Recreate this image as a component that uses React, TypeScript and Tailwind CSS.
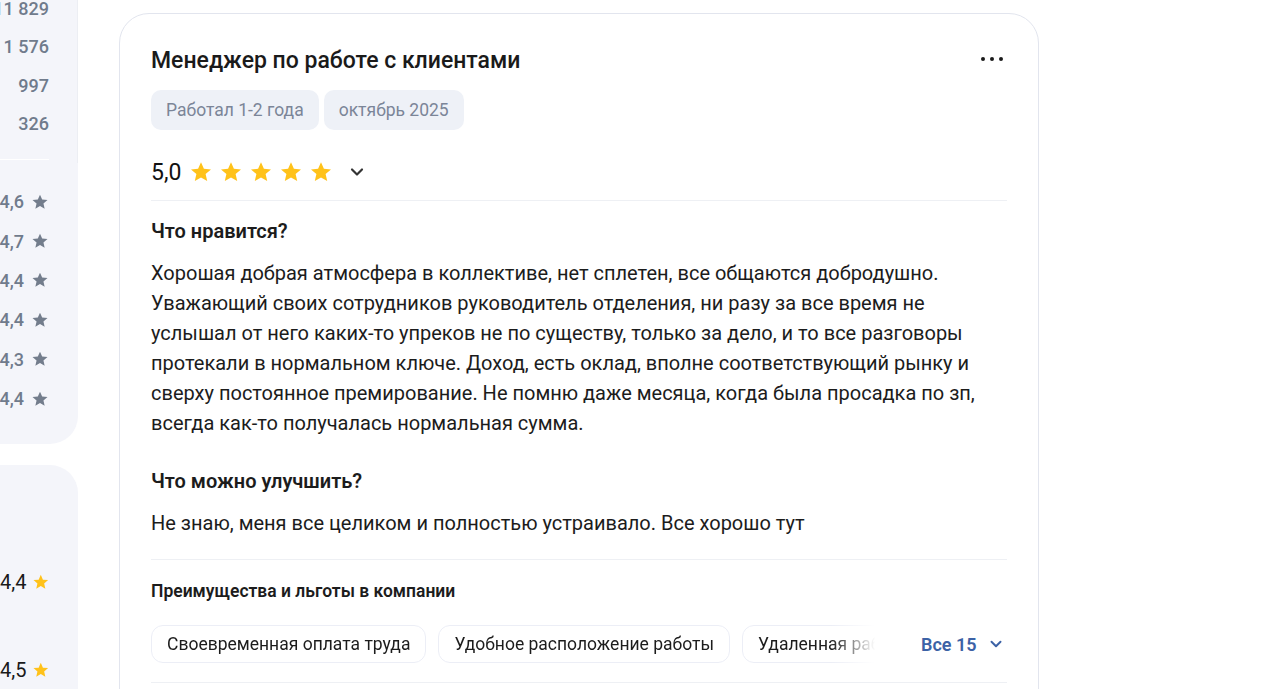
const Star = ({ className }: { className: string }) => (
  <svg viewBox="0 0 24 24" className={className} fill="currentColor" aria-hidden="true">
    <path d="M12 2.2l2.9 6.6 7.1.6-5.4 4.7 1.6 7-6.2-3.7-6.2 3.7 1.6-7L2 9.4l7.1-.6z" />
  </svg>
);

const Chevron = ({ className }: { className: string }) => (
  <svg viewBox="0 0 24 24" className={className} fill="none" stroke="currentColor" strokeWidth="2.6" strokeLinecap="round" strokeLinejoin="round" aria-hidden="true">
    <polyline points="6 9 12 15 18 9" />
  </svg>
);

const counts = ["11 829", "1 576", "997", "326"];
const ratings = ["4,6", "4,7", "4,4", "4,4", "4,3", "4,4"];

const liked = [
  "Хорошая добрая атмосфера в коллективе, нет сплетен, все общаются добродушно.",
  "Уважающий своих сотрудников руководитель отделения, ни разу за все время не",
  "услышал от него каких-то упреков не по существу, только за дело, и то все разговоры",
  "протекали в нормальном ключе. Доход, есть оклад, вполне соответствующий рынку и",
  "сверху постоянное премирование. Не помню даже месяца, когда была просадка по зп,",
  "всегда как-то получалась нормальная сумма.",
];

const benefits = ["Своевременная оплата труда", "Удобное расположение работы", "Удаленная работа"];

export default function App() {
  return (
    <div
      className="flex h-[689px] w-[1261px] gap-[41px] overflow-hidden bg-white"
      style={{ fontFamily: "Roboto, 'Noto Sans', sans-serif" }}
    >
      {/* left sidebar, clipped */}
      <aside className="flex w-[78px] shrink-0 flex-col">
        <div className="relative h-[444px] overflow-hidden rounded-br-[28px] bg-[#f4f5fa] pr-[29px]">
          <div className="absolute right-0 top-0 h-[163px] w-px bg-[#eceef3]" />
          <ul className="-mt-[11px] flex flex-col items-end text-[18px] font-medium text-[#707b8c]">
            {counts.map((c) => (
              <li key={c} className="flex h-[38.5px] items-center whitespace-nowrap">{c}</li>
            ))}
          </ul>
          <div className="ml-auto mt-[16px] h-px w-[49px] bg-white" />
          <ul className="mt-[22px] flex flex-col items-end text-[18px] font-medium text-[#707b8c]">
            {ratings.map((r, i) => (
              <li key={i} className="flex h-[39.4px] items-center gap-[7px] whitespace-nowrap">
                {r}
                <Star className="h-[18px] w-[18px] text-[#737d8c]" />
              </li>
            ))}
          </ul>
        </div>
        <div className="mt-[21px] flex-1 rounded-tr-[28px] bg-[#f4f5fa] pr-[28px]">
          <div className="mt-[102px] flex items-center justify-end gap-[6px] text-[20px] text-[#1a1a1a]">
            4,4 <Star className="h-[22px] w-[22px] text-[#ffc21a]" />
          </div>
          <div className="mt-[58px] flex items-center justify-end gap-[6px] text-[20px] text-[#1a1a1a]">
            4,5 <Star className="h-[22px] w-[22px] text-[#ffc21a]" />
          </div>
        </div>
      </aside>

      {/* review card */}
      <section className="mt-[13px] h-[720px] w-[920px] shrink-0 rounded-[30px] border border-[#e2e5ee] bg-white px-[31px] pt-[33px] text-[#1c1c1c]">
        <div className="flex items-start justify-between">
          <h2 className="text-[23px] font-medium leading-[28px] text-[#1a1a1a]">Менеджер по работе с клиентами</h2>
          <button className="mr-[4px] mt-[10px] flex gap-[5px]" aria-label="Ещё">
            <span className="h-[4px] w-[4px] rounded-full bg-[#1a1a1a]" />
            <span className="h-[4px] w-[4px] rounded-full bg-[#1a1a1a]" />
            <span className="h-[4px] w-[4px] rounded-full bg-[#1a1a1a]" />
          </button>
        </div>

        <div className="mt-[15px] flex gap-[5px]">
          <span className="flex h-[40px] items-center rounded-[10px] bg-[#eef1f7] px-[15px] text-[17.5px] text-[#7b8598]">Работал 1-2 года</span>
          <span className="flex h-[40px] items-center rounded-[10px] bg-[#eef1f7] px-[15px] text-[17.5px] text-[#7b8598]">октябрь 2025</span>
        </div>

        <div className="mt-[26px] flex h-[32px] items-center">
          <span className="text-[23px] leading-none text-[#111]">5,0</span>
          <div className="ml-[8px] flex gap-[6px]">
            {[0, 1, 2, 3, 4].map((i) => (
              <Star key={i} className="h-[24px] w-[24px] text-[#ffc21a]" />
            ))}
          </div>
          <Chevron className="ml-[14px] h-[20px] w-[20px] text-[#333]" />
        </div>

        <div className="mt-[12px] h-px bg-[#eef0f4]" />

        <h3 className="mt-[18px] text-[20px] font-semibold leading-[24px]">Что нравится?</h3>
        <p className="mt-[15px] text-[20px] leading-[30px]">
          {liked.map((l, i) => (
            <span key={i} className="block whitespace-nowrap">{l}</span>
          ))}
        </p>

        <h3 className="mt-[31px] text-[20px] font-semibold leading-[24px]">Что можно улучшить?</h3>
        <p className="mt-[15px] text-[20px] leading-[30px]">Не знаю, меня все целиком и полностью устраивало. Все хорошо тут</p>

        <div className="mt-[21px] h-px bg-[#eef0f4]" />

        <h4 className="mt-[20px] text-[17.5px] font-semibold leading-[22px]">Преимущества и льготы в компании</h4>

        <div className="mt-[23px] flex items-center">
          <div
            className="flex w-[724px] gap-[12px] overflow-hidden"
            style={{ maskImage: "linear-gradient(to right, black 680px, transparent 724px)" }}
          >
            {benefits.map((b) => (
              <span key={b} className="flex h-[38px] shrink-0 items-center whitespace-nowrap rounded-[12px] border border-[#eceef6] px-[15px] text-[17.5px] text-[#1c1c1c]">
                {b}
              </span>
            ))}
          </div>
          <button className="ml-[46px] flex items-center gap-[10px] text-[18px] font-semibold text-[#3c62a6]">
            Все 15
            <Chevron className="h-[18px] w-[18px]" />
          </button>
        </div>

        <div className="mt-[19px] h-px bg-[#eef0f4]" />
      </section>
    </div>
  );
}
